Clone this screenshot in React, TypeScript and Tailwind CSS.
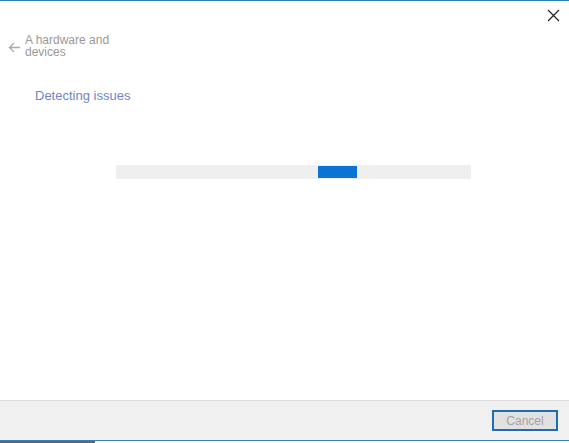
import React from 'react';

const App: React.FC = () => {
  return (
    <div className="w-[569px] h-[443px] bg-white flex flex-col overflow-hidden" style={{ fontFamily: '"Liberation Sans", Arial, sans-serif' }}>
      <div className="h-px bg-[#2a80b9]" />
      <div className="flex-1 flex flex-col">
        <div className="flex justify-end pr-[9px] pt-[8px]">
          <svg width="13" height="13" viewBox="0 0 13 13" className="text-[#222]">
            <path d="M1 1 L12 12 M12 1 L1 12" stroke="currentColor" strokeWidth="1.2" />
          </svg>
        </div>
        <div className="flex items-center pl-[8px] mt-[12px]">
          <svg width="13" height="11" viewBox="0 0 13 11" className="text-[#aaa] mr-[4px] mt-[2px]">
            <path d="M12 5.5 H1.5 M6 1 L1.5 5.5 L6 10" stroke="currentColor" strokeWidth="1.3" fill="none" />
          </svg>
          <div className="text-[12px] leading-[12px] text-[#999]">
            <div>A hardware and</div>
            <div>devices</div>
          </div>
        </div>
        <div className="pl-[35px] mt-[30px] text-[13px] text-[#6d86c7] leading-[15px]">Detecting issues</div>
        <div className="pl-[116px] mt-[62px]">
          <div className="w-[355px] h-[14px] bg-[#efefef] flex items-center">
            <div className="ml-[202px] w-[39px] h-[12px] bg-[#0a74d6]" />
          </div>
        </div>
      </div>
      <div className="h-[40px] bg-[#f0f0f0] border-t border-[#dcdcdc] flex items-center justify-end pr-[11px]">
        <div className="w-[66px] h-[21px] border-2 border-[#1e6db3] bg-[#e1e1e1] flex items-center justify-center text-[12px] text-[#a3a3a3]">
          Cancel
        </div>
      </div>
      <div className="h-px bg-[#3a7fb3]" />
      <div className="h-[2px] bg-white flex">
        <div className="w-[95px] bg-[#666]" />
      </div>
    </div>
  );
};

export default App;
